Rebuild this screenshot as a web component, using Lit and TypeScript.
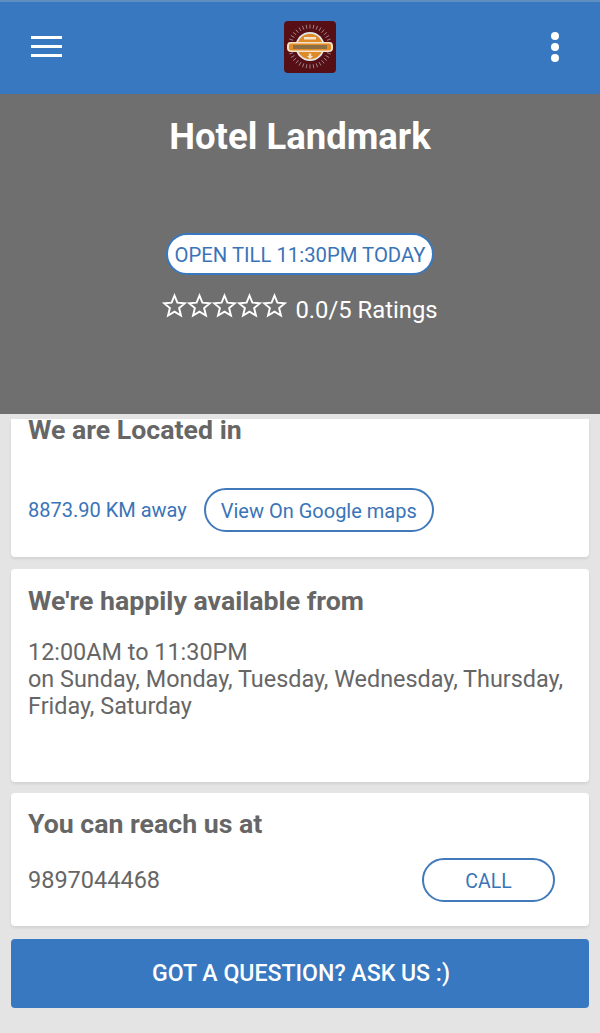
import { LitElement, html, css, svg } from "lit";
import { customElement } from "lit/decorators.js";

const STAR = "M12 1.6l3 7.4 7.9.6-6.1 5.1 1.9 7.7L12 18.3l-6.7 4.1 1.9-7.7L1.1 9.6 9 9z";

@customElement("app-root")
export class AppRoot extends LitElement {
  static styles = css`
    :host {
      display: block;
      width: 600px;
      height: 1033px;
      overflow: hidden;
      background: #e4e4e4;
      font-family: Roboto, "Liberation Sans", sans-serif;
      color: #666;
    }
    .topbar {
      height: 94px;
      box-sizing: border-box;
      background: #3878c0;
      border-top: 2px solid #5f8fc2;
      display: flex;
      align-items: center;
      justify-content: space-between;
      padding: 0 41px 3px 31px;
    }
    .burger {
      width: 31px;
      display: flex;
      flex-direction: column;
      gap: 6px;
    }
    .burger span {
      height: 3px;
      background: #fff;
    }
    .logo {
      display: block;
      width: 52px;
      height: 52px;
      margin: 1px 0 0 7px;
    }
    .dots {
      width: 8px;
      display: flex;
      flex-direction: column;
      gap: 3px;
    }
    .dots span {
      height: 8px;
      border-radius: 50%;
      background: #fff;
    }
    .hero {
      height: 320px;
      background: #6f6f6f;
      display: flex;
      flex-direction: column;
      align-items: center;
      color: #fff;
    }
    .hero h1 {
      margin: 22px 0 0;
      font-size: 36.5px;
      line-height: 42px;
      font-weight: 700;
    }
    .open {
      margin-top: 75px;
      height: 42px;
      padding: 2px 7px 0;
      box-sizing: border-box;
      display: flex;
      align-items: center;
      background: #fff;
      border: 2px solid #3878c0;
      border-radius: 21px;
      color: #3a74b8;
      font-size: 20.3px;
    }
    .rating {
      margin-top: 18px;
      display: flex;
      align-items: center;
      font-size: 23.8px;
      line-height: 34px;
    }
    .stars {
      display: flex;
      margin-right: 8px;
      margin-top: -9px;
    }
    .stars svg {
      display: block;
      width: 25px;
      height: 25px;
      fill: none;
      stroke: #fff;
      stroke-width: 2;
    }
    .content {
      padding: 5px 11px 0;
      display: flex;
      flex-direction: column;
    }
    .card {
      background: #fff;
      border-radius: 0 0 4px 4px;
      box-shadow: 0 2px 3px rgba(0, 0, 0, 0.08);
      box-sizing: border-box;
      padding: 0 17px;
    }
    h2 {
      margin: 0;
      font-size: 26.7px;
      font-weight: 700;
      line-height: 32px;
      color: #666;
    }
    .located {
      height: 138px;
      margin-bottom: 12px;
    }
    .located h2 {
      margin-top: -5px;
    }
    .distance {
      margin-top: 42px;
      display: flex;
      align-items: center;
      gap: 17px;
      color: #3a74b8;
      font-size: 20px;
    }
    .pill {
      box-sizing: border-box;
      height: 44px;
      display: flex;
      align-items: center;
      justify-content: center;
      border: 2px solid #4179ba;
      border-radius: 22px;
      color: #3a74b8;
      background: #fff;
    }
    .maps {
      width: 230px;
      font-size: 20px;
      padding-top: 2px;
    }
    .hours {
      height: 213px;
      margin-bottom: 11px;
      padding-top: 16px;
      border-radius: 4px;
    }
    .hours p {
      margin: 22px 0 0;
      font-size: 23.4px;
      line-height: 27.2px;
    }
    .reach {
      height: 133px;
      padding-top: 15px;
      border-radius: 4px;
    }
    .reach-row {
      margin-top: 18px;
      padding-right: 17px;
      display: flex;
      align-items: center;
      justify-content: space-between;
      font-size: 23.5px;
    }
    .call {
      width: 133px;
      font-size: 19.5px;
      padding-top: 2px;
    }
    .ask {
      margin-top: 13px;
      height: 69px;
      padding-left: 2px;
      display: flex;
      align-items: center;
      justify-content: center;
      background: #3878c0;
      border-radius: 4px;
      color: #fff;
      font-size: 23.1px;
      font-weight: 500;
    }
  `;

  renderLogo() {
    const ticks = [];
    for (let i = 0; i < 36; i++) {
      const a = (i * Math.PI) / 18;
      ticks.push(
        svg`<line x1=${26 + 18 * Math.cos(a)} y1=${25.5 + 18 * Math.sin(a)} x2=${26 + 22 * Math.cos(a)} y2=${25.5 + 22 * Math.sin(a)} stroke="#a88f95" stroke-width="0.9"></line>`
      );
    }
    return html`<svg class="logo" viewBox="0 0 52 52">
      <rect width="52" height="52" rx="4" fill="#560f15"></rect>
      ${ticks}
      <circle cx="26" cy="25.5" r="14.5" fill="#dfe8ec"></circle>
      <circle cx="26" cy="25.5" r="12.8" fill="#df8a28"></circle>
      <rect x="3" y="21" width="46" height="10" rx="4" fill="#f3e4cc"></rect>
      <rect x="5" y="22.5" width="42" height="7" rx="2" fill="#e28d2a"></rect>
      <rect x="9" y="24" width="34" height="4" fill="#8d6f45"></rect>
      <rect x="20" y="16" width="12" height="2.5" fill="#f3e4cc"></rect>
      <path d="M24.8 32.5h2.4v2.5h1.8l-3 3-3-3h1.8z" fill="#f3e4cc"></path>
    </svg>`;
  }

  render() {
    return html`
      <div class="topbar">
        <div class="burger"><span></span><span></span><span></span></div>
        ${this.renderLogo()}
        <div class="dots"><span></span><span></span><span></span></div>
      </div>
      <div class="hero">
        <h1>Hotel Landmark</h1>
        <div class="open">OPEN TILL 11:30PM TODAY</div>
        <div class="rating">
          <div class="stars">
            ${[0, 1, 2, 3, 4].map(
              () => html`<svg viewBox="-1 -1 26 26"><path d=${STAR}></path></svg>`
            )}
          </div>
          0.0/5 Ratings
        </div>
      </div>
      <div class="content">
        <div class="card located">
          <h2>We are Located in</h2>
          <div class="distance">
            <span>8873.90 KM away</span>
            <div class="pill maps">View On Google maps</div>
          </div>
        </div>
        <div class="card hours">
          <h2>We're happily available from</h2>
          <p>12:00AM to 11:30PM<br />on Sunday, Monday, Tuesday, Wednesday, Thursday, Friday, Saturday</p>
        </div>
        <div class="card reach">
          <h2>You can reach us at</h2>
          <div class="reach-row">
            <span>9897044468</span>
            <div class="pill call">CALL</div>
          </div>
        </div>
        <div class="ask">GOT A QUESTION? ASK US :)</div>
      </div>
    `;
  }
}
